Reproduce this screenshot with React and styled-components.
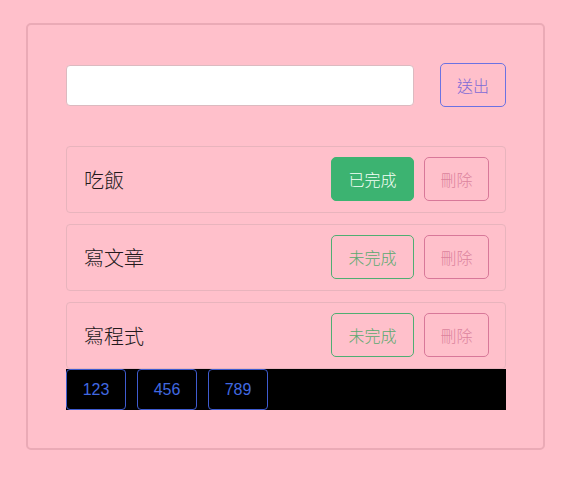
import React, { useState } from "react";
import styled, { createGlobalStyle } from "styled-components";

const GlobalStyle = createGlobalStyle`
  html, body {
    margin: 0;
    padding: 0;
    background: #ffc0cb;
    font-family: "Noto Sans CJK TC", "Liberation Sans", sans-serif;
  }
  * {
    box-sizing: border-box;
  }
`;

const Card = styled.div`
  width: 519px;
  height: 427px;
  margin: 23px 0 0 26px;
  padding: 38px 37px 37px 38px;
  border: 2px solid #eaaab6;
  border-radius: 5px;
`;

const Form = styled.form`
  display: flex;
  align-items: center;
  gap: 26px;
  margin: 0;
`;

const Input = styled.input`
  width: 348px;
  height: 41px;
  border: 1px solid #dcbac0;
  border-radius: 4px;
  background: #fff;
  outline: none;
  padding: 0 10px;
  font-size: 16px;
`;

const SendButton = styled.button`
  width: 66px;
  height: 44px;
  border: 1px solid #6b72e2;
  border-radius: 5px;
  background: transparent;
  color: #7d6ad6;
  font-family: inherit;
  font-weight: 300;
  font-size: 16px;
  padding: 0;
`;

const List = styled.ul`
  list-style: none;
  margin: 39px 0 0;
  padding: 0;
`;

const Item = styled.li`
  height: 67px;
  margin-bottom: 11px;
  padding: 0 16px 0 17px;
  display: flex;
  align-items: center;
  justify-content: space-between;
  border: 1px solid #e8b4bd;
  border-radius: 4px;

  &:last-child {
    margin-bottom: 0;
  }
`;

const Title = styled.span`
  font-size: 20px;
  font-weight: 300;
  color: #231a1c;
`;

const Actions = styled.div`
  display: flex;
  gap: 10px;
  margin-top: -1px;
`;

const StateButton = styled.button`
  width: 83px;
  height: 44px;
  border: 1px solid ${(p) => (p.$done ? "#3cb371" : "#4fae72")};
  border-radius: 5px;
  background: ${(p) => (p.$done ? "#3cb371" : "transparent")};
  color: ${(p) => (p.$done ? "#f4fff6" : "#5aa96f")};
  font-family: inherit;
  font-weight: 300;
  font-size: 16px;
  padding: 0;
`;

const DeleteButton = styled.button`
  width: 65px;
  height: 44px;
  border: 1px solid #d87899;
  border-radius: 5px;
  background: transparent;
  color: #dc839d;
  font-family: inherit;
  font-weight: 300;
  font-size: 16px;
  padding: 0;
`;

const Bar = styled.div`
  display: flex;
  gap: 11px;
  height: 41px;
  background: #000;
`;

const NumButton = styled.button`
  width: 60px;
  height: 41px;
  border: 1px solid #3f5cd0;
  border-radius: 4px;
  background: transparent;
  color: #4169e1;
  font-family: "Liberation Sans", Arial, sans-serif;
  font-size: 16px;
  padding: 0;
`;

export default function App() {
  const [todos] = useState([
    { id: 1, text: "吃飯", done: true },
    { id: 2, text: "寫文章", done: false },
    { id: 3, text: "寫程式", done: false },
  ]);

  return (
    <>
      <GlobalStyle />
      <Card>
        <Form onSubmit={(e) => e.preventDefault()}>
          <Input type="text" />
          <SendButton type="submit">送出</SendButton>
        </Form>
        <List>
          {todos.map((t) => (
            <Item key={t.id}>
              <Title>{t.text}</Title>
              <Actions>
                <StateButton $done={t.done}>{t.done ? "已完成" : "未完成"}</StateButton>
                <DeleteButton>刪除</DeleteButton>
              </Actions>
            </Item>
          ))}
        </List>
        <Bar>
          {["123", "456", "789"].map((n) => (
            <NumButton key={n}>{n}</NumButton>
          ))}
        </Bar>
      </Card>
    </>
  );
}
